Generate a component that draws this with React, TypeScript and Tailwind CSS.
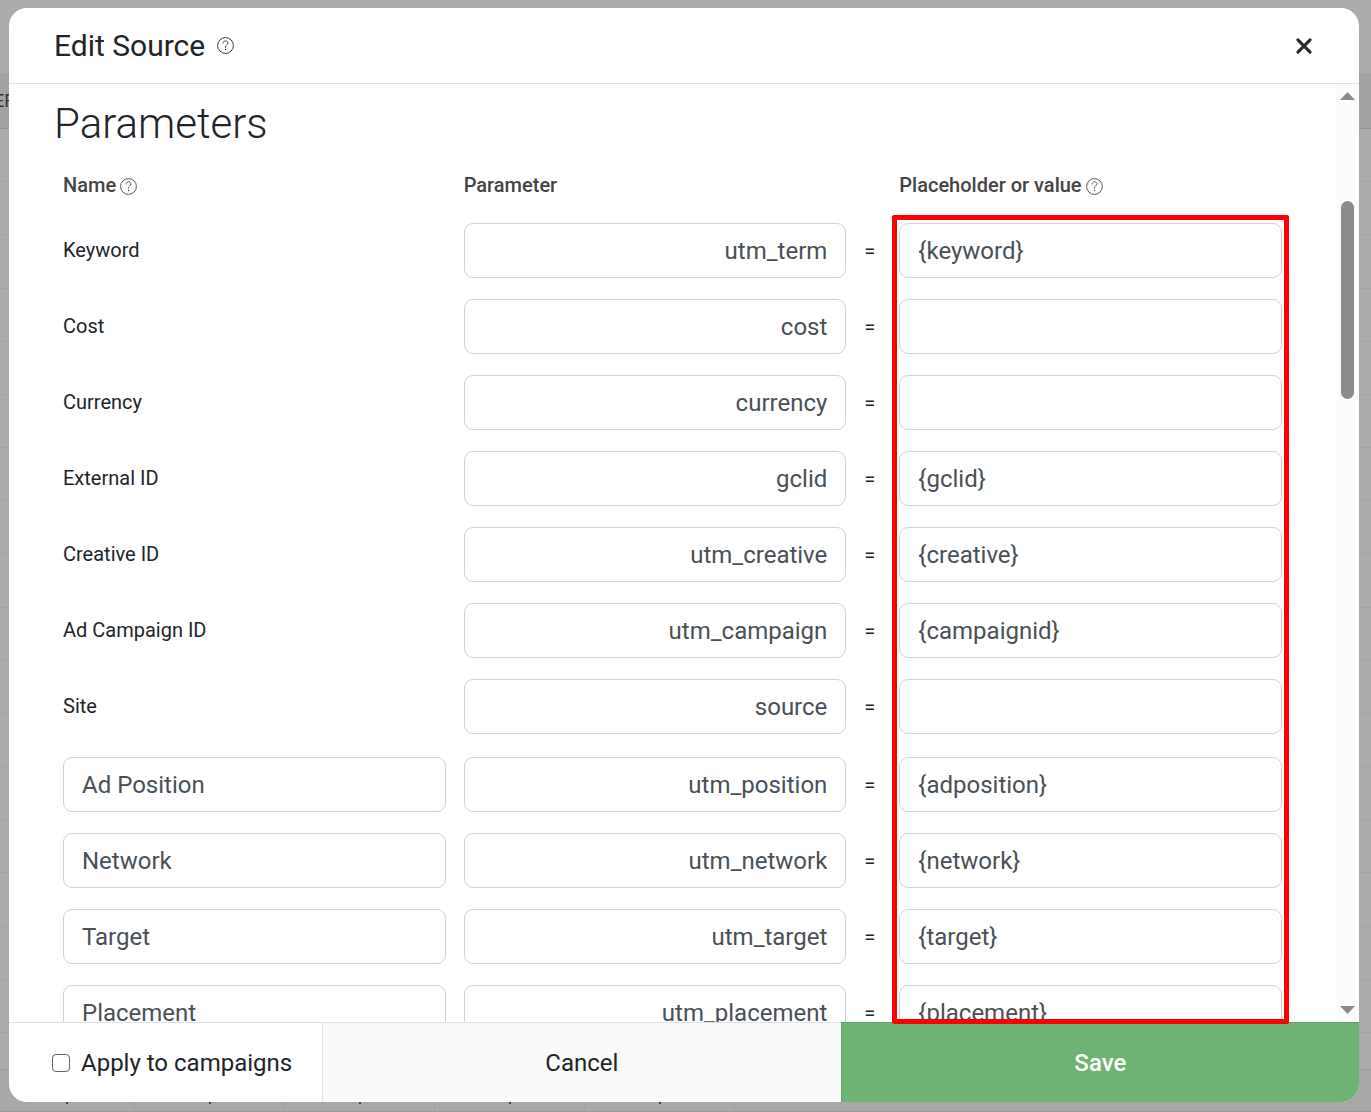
import { useState } from "react";

interface Param {
  name: string;
  param: string;
  value: string;
}

const builtInParams: Param[] = [
  { name: "Keyword", param: "utm_term", value: "{keyword}" },
  { name: "Cost", param: "cost", value: "" },
  { name: "Currency", param: "currency", value: "" },
  { name: "External ID", param: "gclid", value: "{gclid}" },
  { name: "Creative ID", param: "utm_creative", value: "{creative}" },
  { name: "Ad Campaign ID", param: "utm_campaign", value: "{campaignid}" },
  { name: "Site", param: "source", value: "" },
];

const customParams: Param[] = [
  { name: "Ad Position", param: "utm_position", value: "{adposition}" },
  { name: "Network", param: "utm_network", value: "{network}" },
  { name: "Target", param: "utm_target", value: "{target}" },
  { name: "Placement", param: "utm_placement", value: "{placement}" },
];

const rowClass = "grid grid-cols-[1fr_1fr_17px_1fr] items-center gap-x-[18px]";
const inputClass =
  "block h-[55px] w-full rounded-[9px] border border-[#ced4da] bg-white px-[18px] text-[24px] text-[#495057] outline-none";

function HelpIcon({ className }: { className?: string }) {
  return (
    <svg
      className={className}
      width="17"
      height="17"
      viewBox="0 0 17 17"
      fill="none"
      stroke="currentColor"
      aria-hidden="true"
    >
      <circle cx="8.5" cy="8.5" r="7.9" strokeWidth="0.9" />
      <path
        d="M6.1 6.1C6.1 4.7 7.1 3.9 8.5 3.9s2.4.8 2.4 2.1c0 1-.6 1.5-1.3 2-.8.6-1.1 1-1.1 1.8v.5"
        strokeWidth="0.8"
        strokeLinecap="round"
      />
      <circle cx="8.5" cy="12.5" r="0.7" fill="currentColor" stroke="none" />
    </svg>
  );
}

function ParamRow({ item, custom }: { item: Param; custom?: boolean }) {
  return (
    <tr className={rowClass}>
      <td>
        {custom ? (
          <input className={inputClass} defaultValue={item.name} aria-label="Name" />
        ) : (
          <span className="block pb-0.5 text-[20px] leading-6">{item.name}</span>
        )}
      </td>
      <td>
        <input
          className={`${inputClass} text-right`}
          defaultValue={item.param}
          aria-label={`${item.name} parameter`}
        />
      </td>
      <td className="text-[20px] leading-6">=</td>
      <td>
        <input className={inputClass} defaultValue={item.value} aria-label={`${item.name} value`} />
      </td>
    </tr>
  );
}

/* Dimmed page behind the dialog */
function Backdrop() {
  return (
    <div className="absolute inset-0 flex flex-col overflow-hidden bg-[#ababab]" aria-hidden="true">
      <div className="h-[75px] shrink-0 border-b border-[#9a9a9a]" />
      <div className="flex h-[54px] shrink-0 items-center border-b border-[#929292] bg-[#a3a3a3] pb-0.5 text-[18px] text-[#333]">
        <span className="-ml-1.5">ER</span>
      </div>
      <div className="flex flex-1 flex-col">
        {Array.from({ length: 17 }, (_, i) => (
          <div key={i} className="flex-1 border-b border-[#a4a4a4]" />
        ))}
      </div>
      <div className="h-9 shrink-0" />
      <div className="flex h-[43px] shrink-0 border-y border-[#999] bg-[#a8a8a8]">
        {Array.from({ length: 5 }, (_, i) => (
          <div key={i} className="flex h-full w-[150px] items-end justify-center border-r border-[#a0a0a0] pb-[7px] first:w-[135px]">
            <span className="h-1 w-0.5 bg-[#444]" />
          </div>
        ))}
      </div>
    </div>
  );
}

export default function App() {
  const [apply, setApply] = useState(false);

  return (
    <div className="relative h-screen overflow-hidden pt-2 pr-3 pb-2.5 pl-[9px] font-[Roboto,sans-serif] text-[#212529]">
      <Backdrop />

      <div
        role="dialog"
        aria-labelledby="dialog-title"
        className="relative flex h-full flex-col rounded-[18px] bg-white"
      >
        {/* Header */}
        <header className="flex h-[76px] shrink-0 items-center border-b border-[#dee2e6] pr-[46px] pl-[45px]">
          <h1 id="dialog-title" className="text-[30px] leading-9">
            Edit Source
          </h1>
          <button className="ml-3" aria-label="Help">
            <HelpIcon />
          </button>
          <button className="ml-auto" aria-label="Close">
            <svg width="18" height="18" viewBox="0 0 18 18" fill="none" stroke="currentColor" aria-hidden="true">
              <path d="M2.9 2.9l12.2 12.2M15.1 2.9L2.9 15.1" strokeWidth="3" strokeLinecap="round" />
            </svg>
          </button>
        </header>

        {/* Body */}
        <div className="relative flex min-h-0 flex-1">
          <main className="min-w-0 flex-1 overflow-hidden px-[54px] pt-4">
            <h2 className="-ml-[9px] text-[42px] leading-[48px] font-light">Parameters</h2>
            <table className="mt-[23px] block w-full text-left">
              <thead className="block">
                <tr className={`${rowClass} text-[20px] leading-7 text-[#444]`}>
                  <th className="flex items-center gap-1 font-medium">
                    Name <HelpIcon className="mt-0.5" />
                  </th>
                  <th className="font-medium">Parameter</th>
                  <th />
                  <th className="flex items-center gap-1 font-medium">
                    Placeholder or value <HelpIcon className="mt-0.5" />
                  </th>
                </tr>
              </thead>
              <tbody className="flex flex-col gap-[21px] pt-6">
                {builtInParams.map((item) => (
                  <ParamRow key={item.name} item={item} />
                ))}
              </tbody>
              <tbody className="flex flex-col gap-[21px] pt-[23px]">
                {customParams.map((item) => (
                  <ParamRow key={item.name} item={item} custom />
                ))}
              </tbody>
            </table>
          </main>

          {/* Scrollbar */}
          <div className="flex w-[23px] shrink-0 flex-col items-center bg-[#fcfcfc] py-2 text-[#8b8b8b]">
            <svg width="15" height="8" viewBox="0 0 15 8" fill="currentColor" aria-hidden="true">
              <path d="M7.5 0L15 8H0z" />
            </svg>
            <div className="mt-[101px] h-[198px] w-[13px] rounded-full bg-[#8b8b8b]" />
            <svg className="mt-auto" width="15" height="8" viewBox="0 0 15 8" fill="currentColor" aria-hidden="true">
              <path d="M0 0h15L7.5 8z" />
            </svg>
          </div>

          {/* Highlight around the value column */}
          <div className="pointer-events-none absolute top-[131px] right-[70px] -bottom-0.5 z-10 w-[calc((100%-202px)/3+14px)] rounded-xs border-5 border-[#ff0000]" />
        </div>

        {/* Footer */}
        <footer className="flex h-20 shrink-0 overflow-hidden rounded-b-[18px] text-[24px]">
          <label className="flex shrink-0 items-center gap-[11px] border-t border-r border-[#dee2e6] pr-[30px] pl-[43px]">
            <input
              type="checkbox"
              className="size-[18px] appearance-none rounded-sm border border-[#666] bg-white checked:bg-[#6fb374]"
              checked={apply}
              onChange={(e) => setApply(e.target.checked)}
            />
            Apply to campaigns
          </label>
          <button className="flex-1 border-t border-[#dee2e6] bg-[#fafafa]">Cancel</button>
          <button className="flex-1 border-t border-l border-[#61a366] bg-[#6fb374] font-medium text-white">Save</button>
        </footer>
      </div>
    </div>
  );
}
